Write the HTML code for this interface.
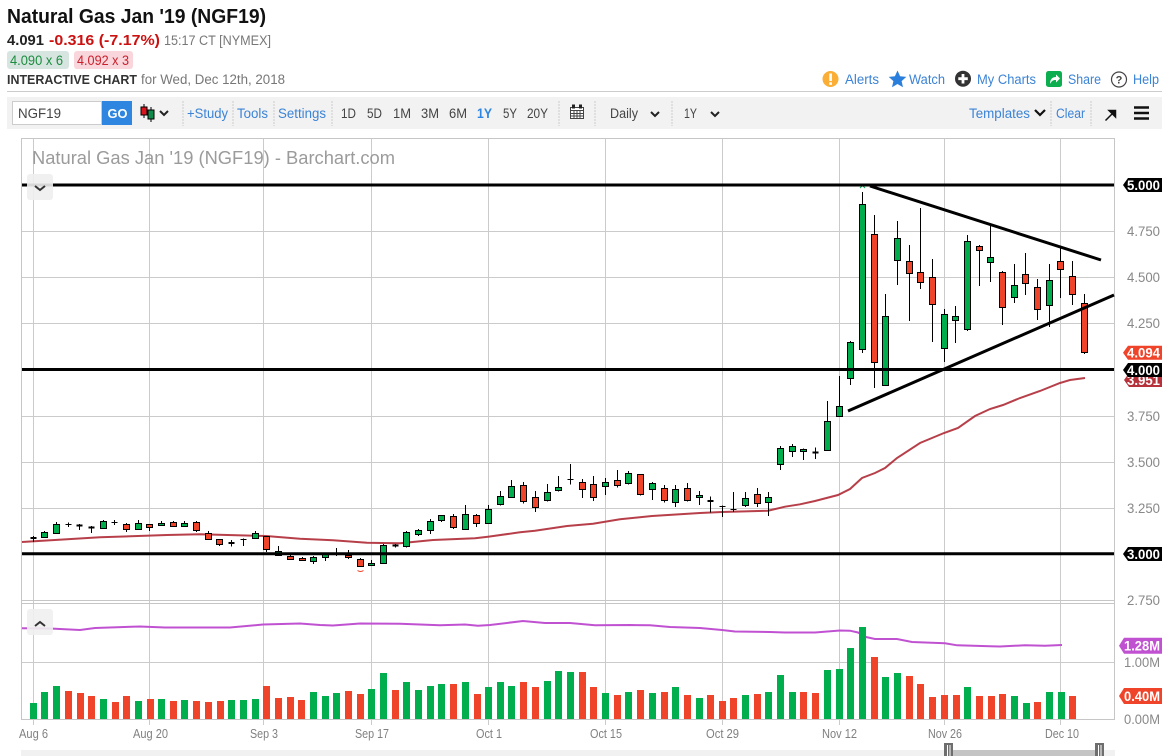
<!DOCTYPE html>
<html><head><meta charset="utf-8"><title>Natural Gas Jan '19 (NGF19)</title>
<style>
html,body{margin:0;padding:0;background:#fff;width:1162px;height:756px;overflow:hidden}
svg{display:block;font-family:"Liberation Sans",sans-serif}
.b{fill:#3b83d6;font-size:13.5px}
.k{fill:#444;font-size:13.5px}
.d{fill:#808080;font-size:13px}
.w{fill:#fff;font-size:13.5px;font-weight:bold}
</style></head><body>
<svg width="1162" height="756" viewBox="0 0 1162 756" xmlns="http://www.w3.org/2000/svg">
<rect width="1162" height="756" fill="#fff"/>
<!-- header -->
<text x="7" y="23" font-size="20" font-weight="bold" fill="#111" textLength="259" lengthAdjust="spacingAndGlyphs">Natural Gas Jan '19 (NGF19)</text>
<text x="7" y="45" font-size="15" font-weight="bold" fill="#222" textLength="37" lengthAdjust="spacingAndGlyphs">4.091</text>
<text x="49" y="45" font-size="15" font-weight="bold" fill="#cc1111" textLength="111" lengthAdjust="spacingAndGlyphs">-0.316 (-7.17%)</text>
<text x="164" y="45" font-size="13.5" fill="#777" textLength="107" lengthAdjust="spacingAndGlyphs">15:17 CT [NYMEX]</text>
<rect x="7" y="51" width="62" height="18" rx="3" fill="#d6e5e0"/>
<text x="10" y="65" font-size="13.5" fill="#1c8c3e" textLength="53" lengthAdjust="spacingAndGlyphs">4.090 x 6</text>
<rect x="74" y="51" width="59" height="18" rx="3" fill="#f8d6dc"/>
<text x="77" y="65" font-size="13.5" fill="#c9202c" textLength="52" lengthAdjust="spacingAndGlyphs">4.092 x 3</text>
<text x="7" y="84" font-size="13" font-weight="bold" fill="#333" textLength="130" lengthAdjust="spacingAndGlyphs">INTERACTIVE CHART</text>
<text x="141" y="84" font-size="13.5" fill="#777" textLength="144" lengthAdjust="spacingAndGlyphs">for Wed, Dec 12th, 2018</text>
<rect x="7" y="91" width="1155" height="1" fill="#ccc"/>
<!-- top right links -->
<circle cx="830.5" cy="79" r="8" fill="#fbae35"/><rect x="829.3" y="73.5" width="2.6" height="7.5" fill="#fff"/><rect x="829.3" y="82.3" width="2.6" height="2.6" fill="#fff"/>
<text class="b" x="845" y="84" textLength="34" lengthAdjust="spacingAndGlyphs">Alerts</text>
<path d="M897.5 70.5l2.6 5.8 6.2.6-4.7 4.2 1.4 6.2-5.5-3.3-5.5 3.3 1.4-6.2-4.7-4.2 6.2-.6z" fill="#2a7fdc"/>
<text class="b" x="909" y="84" textLength="36" lengthAdjust="spacingAndGlyphs">Watch</text>
<circle cx="963" cy="78.7" r="8" fill="#333"/><path d="M963 74v9.5M958.3 78.7h9.5" stroke="#fff" stroke-width="2.8"/>
<text class="b" x="977" y="84" textLength="59" lengthAdjust="spacingAndGlyphs">My Charts</text>
<rect x="1046" y="71" width="16" height="16" rx="2.5" fill="#0cae4f"/><path d="M1050 84c0-5 2.500-7 6-7v-2.500l4 4-4 4V80c-2.800-.2-4.500 1-6 4z" fill="#fff"/>
<text class="b" x="1068" y="84" textLength="33" lengthAdjust="spacingAndGlyphs">Share</text>
<circle cx="1119" cy="79.500" r="7.500" fill="none" stroke="#444" stroke-width="1.200"/><text x="1119" y="83.500" font-size="11" font-weight="bold" fill="#444" text-anchor="middle">?</text>
<text class="b" x="1133" y="84" textLength="26" lengthAdjust="spacingAndGlyphs">Help</text>
<!-- toolbar -->
<rect x="7" y="97" width="1155" height="32" fill="#f2f2f2"/>
<rect x="12.500" y="101.500" width="89" height="23" fill="#fff" stroke="#ccc"/>
<text x="18" y="118" font-size="14" fill="#444" textLength="43" lengthAdjust="spacingAndGlyphs">NGF19</text>
<rect x="102" y="101" width="30" height="24" fill="#2f86e0"/>
<text x="107.500" y="118" font-size="13" font-weight="bold" fill="#fff" textLength="20" lengthAdjust="spacingAndGlyphs">GO</text>
<path d="M144 104v14M151 107v15" stroke="#000" stroke-width="1"/><rect x="141" y="107" width="6" height="8" fill="#d8141c" stroke="#000"/><rect x="148" y="110" width="6" height="9" fill="#108a4a" stroke="#000"/>
<path d="M160 111l4 4 4-4" fill="none" stroke="#222" stroke-width="2"/>
<path d="M183 101v25M233 101v25M274 101v25M332 101v25M559 101v25M595 101v25M672 101v25M1051 101v25M1091 101v25" stroke="#ccc" stroke-dasharray="2 1"/>
<text class="b" x="187" y="118" textLength="41" lengthAdjust="spacingAndGlyphs">+Study</text>
<text class="b" x="237" y="118" textLength="31" lengthAdjust="spacingAndGlyphs">Tools</text>
<text class="b" x="278" y="118" textLength="48" lengthAdjust="spacingAndGlyphs">Settings</text>
<text class="k" x="341" y="118" textLength="15" lengthAdjust="spacingAndGlyphs">1D</text>
<text class="k" x="367" y="118" textLength="15" lengthAdjust="spacingAndGlyphs">5D</text>
<text class="k" x="393" y="118" textLength="18" lengthAdjust="spacingAndGlyphs">1M</text>
<text class="k" x="421" y="118" textLength="18" lengthAdjust="spacingAndGlyphs">3M</text>
<text class="k" x="449" y="118" textLength="18" lengthAdjust="spacingAndGlyphs">6M</text>
<text x="477" y="118" font-size="13.5" font-weight="bold" fill="#2f86e0" textLength="15" lengthAdjust="spacingAndGlyphs">1Y</text>
<text class="k" x="503" y="118" textLength="14" lengthAdjust="spacingAndGlyphs">5Y</text>
<text class="k" x="527" y="118" textLength="21" lengthAdjust="spacingAndGlyphs">20Y</text>
<path d="M570.500 107.500h13v11h-13zM570.500 110.500h13M570.500 113.500h13M570.500 116h13M574 110.500v8M577 110.500v8M580 110.500v8" fill="#fff" stroke="#444" stroke-width="1"/>
<rect x="572" y="104.500" width="3" height="4" fill="#222"/><rect x="579" y="104.500" width="3" height="4" fill="#222"/>
<text class="k" x="610" y="118" textLength="28" lengthAdjust="spacingAndGlyphs">Daily</text>
<path d="M651 112l4 4 4-4" fill="none" stroke="#222" stroke-width="2"/>
<text class="k" x="684" y="118" textLength="13" lengthAdjust="spacingAndGlyphs">1Y</text>
<path d="M711 112l4 4 4-4" fill="none" stroke="#222" stroke-width="2"/>
<text class="b" x="969" y="118" textLength="61" lengthAdjust="spacingAndGlyphs">Templates</text>
<path d="M1035 110l5 5 5-5" fill="none" stroke="#111" stroke-width="2.200"/>
<text class="b" x="1056" y="118" textLength="29" lengthAdjust="spacingAndGlyphs">Clear</text>
<path d="M1105.500 120.500l9-9M1109 110.500h6.500v6.500z" fill="#111" stroke="#111" stroke-width="1.500"/>
<path d="M1134 107.500h15M1134 113h15M1134 118.500h15" stroke="#111" stroke-width="2.500"/>
<!-- chart grid -->
<g stroke="#cbcbcb" fill="none">
<path d="M33.500 138V720M149.500 138V720M263.500 138V720M371.500 138V720M488.500 138V720M605.500 138V720M722.500 138V720M839.500 138V720M944.500 138V720M1060.500 138V720"/>
<path d="M22 231.500H1114M22 277.500H1114M22 323.500H1114M22 416.500H1114M22 462.500H1114M22 508.500H1114M22 662.500H1114"/>
<path d="M33.500 720v5M149.500 720v5M263.500 720v5M371.500 720v5M488.500 720v5M605.500 720v5M722.500 720v5M839.500 720v5M944.500 720v5M1060.500 720v5"/>
</g>
<path d="M22 600.500H1114.500M22 603.500H1114.500M21.500 138.500H1114.500V719.500H21.500Z" fill="none" stroke="#c6c6c6" stroke-width="1"/>
<text x="32" y="164" font-size="18.5" fill="#9b9b9b" textLength="363" lengthAdjust="spacingAndGlyphs">Natural Gas Jan '19 (NGF19) - Barchart.com</text>
<!-- MA -->
<path d="M22 542L100 537.300L167 535L200 534.300L266 536L300 538.700L333 540.300L367 542.700L400 543.300L433 540L475 538.300L488 536.700L520 532.300L535 530.700L567 526L593 523.700L620 519.300L652 516L700 513L722 512L768 510.700L785 506.700L800 504.300L815 501L838 495L850 489L862 478L875 473L885 468L897 458L920 443L944 433L958 428L975 416L990 409L1003 405L1020 398L1040 391L1060 383L1070 380L1085 378" fill="none" stroke="#b12f3a" stroke-width="2" stroke-opacity=".92"/>
<!-- purple -->
<path d="M22 628.300L50 628.500L80 630L95 628L140 626.500L165 627.500L230 627.500L263 624.500L300 623.500L320 625L333 625.500L360 623.500L400 623.700L440 625.300L465 624.500L478 625.700L490 625L523 621L545 623L570 623L595 625.300L630 625L650 625.300L670 627L700 628L722 630L735 631.500L770 632L785 632.500L815 632.500L840 630.500L850 630.700L858 632.500L866 637L875 639L897 639L912 642L945 643.300L957 645.300L990 646.300L1000 646.500L1025 645.300L1045 645.700L1062 645" fill="none" stroke="#c052d2" stroke-width="2"/>
<!-- volume green -->
<path fill="#00ae4d" d="M30 703h7v16h-7zM41 692h7v27h-7zM53 686h7v33h-7zM100 699h7v20h-7zM135 701h7v18h-7zM158 699h7v20h-7zM181 700h7v19h-7zM228 700h7v19h-7zM240 700h7v19h-7zM252 699h7v20h-7zM310 692h7v27h-7zM322 696h7v23h-7zM333 693h7v26h-7zM368 689h7v30h-7zM380 673h7v46h-7zM403 682h7v37h-7zM415 690h7v29h-7zM427 686h7v33h-7zM438 684h7v35h-7zM462 682h7v37h-7zM485 687h7v32h-7zM497 682h7v37h-7zM508 686h7v33h-7zM544 681h7v38h-7zM555 671h7v48h-7zM567 672h7v47h-7zM602 693h7v26h-7zM625 692h7v27h-7zM649 693h7v26h-7zM672 687h7v32h-7zM696 698h7v21h-7zM742 695h7v24h-7zM765 692h7v27h-7zM777 675h7v44h-7zM789 692h7v27h-7zM824 670h7v49h-7zM836 669h7v50h-7zM847 648h7v71h-7zM859 627h7v92h-7zM882 677h7v42h-7zM894 673h7v46h-7zM964 687h7v32h-7zM1011 696h7v23h-7zM1023 703h7v16h-7zM1046 692h7v27h-7zM1058 692h7v27h-7z"/>
<!-- volume red -->
<path fill="#f0442a" d="M65 691h7v28h-7zM77 693h7v26h-7zM88 696h7v23h-7zM112 702h7v17h-7zM123 696h7v23h-7zM147 699h7v20h-7zM170 701h7v18h-7zM193 701h7v18h-7zM205 702h7v17h-7zM217 701h7v18h-7zM263 686h7v33h-7zM275 698h7v21h-7zM287 697h7v22h-7zM298 700h7v19h-7zM345 691h7v28h-7zM357 694h7v25h-7zM392 690h7v29h-7zM450 684h7v35h-7zM474 694h7v25h-7zM520 682h7v37h-7zM532 687h7v32h-7zM579 672h7v47h-7zM590 687h7v32h-7zM614 695h7v24h-7zM637 690h7v29h-7zM661 692h7v27h-7zM684 695h7v24h-7zM707 695h7v24h-7zM719 701h7v18h-7zM730 698h7v21h-7zM754 694h7v25h-7zM800 692h7v27h-7zM812 693h7v26h-7zM871 657h7v62h-7zM906 676h7v43h-7zM917 684h7v35h-7zM929 697h7v22h-7zM941 695h7v24h-7zM953 695h7v24h-7zM976 696h7v23h-7zM988 696h7v23h-7zM999 694h7v25h-7zM1034 702h7v17h-7zM1069 696h7v23h-7z"/>
<!-- wicks -->
<path stroke="#000" stroke-width="1" fill="none" d="M33.500 536V542M44.500 531V538M56.500 522V534M68.500 522.500V527M79.500 524V530M91.500 526V533M103.500 520V529M114.500 520V525M126.500 523V532M138.500 520V530M149.500 524V531M161.500 521V526M173.500 521V527M184.500 521V527M196.500 521V532M208.500 531V540M219.500 539V546M231.500 540V546.500M243.500 538.500V546M255.500 531V539M266.500 536V552M278.500 546V556M290.500 555V560M302.500 557V561M313.500 556V564M325.500 554V561M336.500 548V556M348.500 550V559M360.500 558V567M371.500 560V566M383.500 544V564M395.500 544V547.500M406.500 531V547.500M418.500 529V536M430.500 519V534M441.500 515V522M453.500 514V529M465.500 505V530M476.500 514V527M488.500 505V524M500.500 491V505.500M511.500 480V498M523.500 482V503.500M535.500 491V512M547.500 484V501.500M558.500 476V491.500M570.500 464V484.500M582.500 479V498M593.500 476V501M605.500 478V495M617.500 470V487.500M628.500 471V484.500M640.500 474V495.500M652.500 482V500M664.500 485V502.500M675.500 485V507M687.500 483V501.500M699.500 491V505M710.500 496.500V512.500M722.500 505.500V517M733.500 492V512M745.500 492V507M757.500 488V507M768.500 492V516M780.500 446V470M792.500 444V457M803.500 448.500V460M815.500 447.500V459M827.500 401V451M839.500 376V417M850.500 341V385M862.500 192V353M874.500 215V388M885.500 294V386M897.500 221V285M909.500 245V321M920.500 208V289M932.500 259V342M944.500 309V362M955.500 306V343M967.500 235V331M979.500 245V286M990.500 225V282M1002.500 271V325M1014.500 264V303M1025.500 253V295M1037.500 279V320M1049.500 264V327M1060.500 247V298M1072.500 261V305M1084.500 294V354"/>
<!-- dojis -->
<path stroke="#000" fill="none" stroke-width="2" d="M30.500 538h6M76.500 525.500h6M88.500 527.500h6M228.500 543h6M707.500 501h6M812.500 452.500h6M392.500 545.500h6"/>
<path stroke="#000" fill="none" stroke-width="1" d="M65.500 524.500h6M111.500 522.500h6M240.500 539.500h6M567.500 479.500h6M719.500 506.500h6M730.500 509.500h6"/>
<!-- green bodies -->
<path fill="#00ad4c" stroke="#000" stroke-width="1" d="M41.500 532.500h6v5h-6zM53.500 524.500h6v9h-6zM100.500 521.500h6v7h-6zM135.500 523.500h6v6h-6zM158.500 523.500h6v2h-6zM181.500 523.500h6v3h-6zM252.500 533.500h6v5h-6zM275.500 551.500h6v4h-6zM310.500 557.500h6v4h-6zM322.500 554.500h6v3h-6zM368.500 563.500h6v2h-6zM380.500 545.500h6v18h-6zM403.500 532.500h6v14h-6zM415.500 530.500h6v4h-6zM427.500 521.500h6v9h-6zM438.500 515.500h6v5h-6zM462.500 514.500h6v15h-6zM485.500 509.500h6v14h-6zM497.500 496.500h6v8h-6zM508.500 486.500h6v11h-6zM544.500 492.500h6v8h-6zM555.500 487.500h6v3h-6zM602.500 482.500h6v4h-6zM625.500 473.500h6v10h-6zM649.500 483.500h6v6h-6zM672.500 489.500h6v13h-6zM696.500 495.500h6v2h-6zM742.500 498.500h6v7h-6zM765.500 497.500h6v5h-6zM777.500 448.500h6v16h-6zM789.500 446.500h6v5h-6zM800.500 449.500h6v2h-6zM824.500 421.500h6v29h-6zM836.500 406.500h6v10h-6zM847.500 342.500h6v36h-6zM859.500 204.500h6v145h-6zM882.500 316.500h6v69h-6zM894.500 238.500h6v22h-6zM941.500 314.500h6v34h-6zM952.500 316.500h6v4h-6zM964.500 241.500h6v88h-6zM987.500 257.500h6v5h-6zM1011.500 285.500h6v12h-6zM1046.500 280.500h6v25h-6z"/>
<!-- red bodies -->
<path fill="#f0442a" stroke="#000" stroke-width="1" d="M123.500 524.500h6v5h-6zM146.500 524.500h6v3h-6zM170.500 522.500h6v4h-6zM193.500 522.500h6v8h-6zM205.500 533.500h6v6h-6zM216.500 539.500h6v5h-6zM263.500 536.500h6v13h-6zM287.500 556.500h6v3h-6zM299.500 558.500h6v2h-6zM345.500 555.500h6v2h-6zM357.500 559.500h6v7h-6zM450.500 516.500h6v11h-6zM473.500 515.500h6v8h-6zM520.500 485.500h6v16h-6zM532.500 497.500h6v10h-6zM579.500 482.500h6v7h-6zM590.500 484.500h6v13h-6zM614.500 480.500h6v5h-6zM637.500 474.500h6v20h-6zM661.500 488.500h6v12h-6zM684.500 488.500h6v12h-6zM754.500 494.500h6v9h-6zM871.500 234.500h6v128h-6zM906.500 261.500h6v12h-6zM917.500 272.500h6v10h-6zM929.500 277.500h6v27h-6zM976.500 246.500h6v4h-6zM999.500 272.500h6v35h-6zM1022.500 274.500h6v9h-6zM1034.500 287.500h6v22h-6zM1057.500 261.500h6v8h-6zM1069.500 276.500h6v18h-6zM1081.500 303.500h6v49h-6z"/>
<path d="M357.500 570.500q3 2 6 0" fill="none" stroke="#f0442a" stroke-width="1"/>
<path d="M860 188l2.500-2.500 2.500 2.500" fill="none" stroke="#00ad4c" stroke-width="1"/>
<!-- horizontal black lines -->
<path d="M22 185H1114M22 369.500H1114M22 553.700H1114" stroke="#000" stroke-width="3"/>
<path d="M870 186L1101 260M848 411L1114 295" stroke="#000" stroke-width="3"/>
<!-- collapse buttons -->
<rect x="27" y="174" width="26" height="26" rx="3" fill="#eee" fill-opacity=".9"/>
<path d="M35 186l5 4 5-4" fill="none" stroke="#333" stroke-width="2"/>
<rect x="27" y="609" width="26" height="26" rx="3" fill="#f0f0f0" fill-opacity=".9"/>
<path d="M35 626l5-4 5 4" fill="none" stroke="#333" stroke-width="2"/>
<!-- right axis -->
<g fill="#888" font-size="13.5">
<text x="1127" y="236" textLength="33" lengthAdjust="spacingAndGlyphs">4.750</text>
<text x="1127" y="282" textLength="33" lengthAdjust="spacingAndGlyphs">4.500</text>
<text x="1127" y="328" textLength="33" lengthAdjust="spacingAndGlyphs">4.250</text>
<text x="1127" y="421" textLength="33" lengthAdjust="spacingAndGlyphs">3.750</text>
<text x="1127" y="467" textLength="33" lengthAdjust="spacingAndGlyphs">3.500</text>
<text x="1127" y="513" textLength="33" lengthAdjust="spacingAndGlyphs">3.250</text>
<text x="1127" y="605" textLength="33" lengthAdjust="spacingAndGlyphs">2.750</text>
<text x="1124" y="667" textLength="36" lengthAdjust="spacingAndGlyphs">1.00M</text>
<text x="1124" y="724" textLength="36" lengthAdjust="spacingAndGlyphs">0.00M</text>
</g>
<path d="M1124 380l5-7h33v14h-33z" fill="#b5323a"/><text class="w" x="1127" y="385" textLength="33" lengthAdjust="spacingAndGlyphs">3.951</text>
<path d="M1123 352.700l5-7h34v14h-34z" fill="#f0442a"/><text class="w" x="1127" y="357.500" textLength="33" lengthAdjust="spacingAndGlyphs">4.094</text>
<path d="M1123 370l5-7h34v14h-34z" fill="#000"/><text class="w" x="1127" y="375" textLength="33" lengthAdjust="spacingAndGlyphs">4.000</text>
<path d="M1123 185l5-7h34v14h-34z" fill="#000"/><text class="w" x="1127" y="190" textLength="33" lengthAdjust="spacingAndGlyphs">5.000</text>
<path d="M1123 554l5-7h34v14h-34z" fill="#000"/><text class="w" x="1127" y="559" textLength="33" lengthAdjust="spacingAndGlyphs">3.000</text>
<path d="M1119 645.700l5-8h38v16h-38z" fill="#c052d2"/><text class="w" x="1124" y="650.500" textLength="36" lengthAdjust="spacingAndGlyphs">1.28M</text>
<path d="M1119 696l5-8h38v16h-38z" fill="#f0442a"/><text class="w" x="1124" y="701" textLength="36" lengthAdjust="spacingAndGlyphs">0.40M</text>
<!-- dates -->
<text class="d" x="19" y="738" textLength="29" lengthAdjust="spacingAndGlyphs">Aug 6</text>
<text class="d" x="133" y="738" textLength="35" lengthAdjust="spacingAndGlyphs">Aug 20</text>
<text class="d" x="250" y="738" textLength="28" lengthAdjust="spacingAndGlyphs">Sep 3</text>
<text class="d" x="355" y="738" textLength="34" lengthAdjust="spacingAndGlyphs">Sep 17</text>
<text class="d" x="476" y="738" textLength="26" lengthAdjust="spacingAndGlyphs">Oct 1</text>
<text class="d" x="590" y="738" textLength="32" lengthAdjust="spacingAndGlyphs">Oct 15</text>
<text class="d" x="706" y="738" textLength="33" lengthAdjust="spacingAndGlyphs">Oct 29</text>
<text class="d" x="822" y="738" textLength="35" lengthAdjust="spacingAndGlyphs">Nov 12</text>
<text class="d" x="928" y="738" textLength="34" lengthAdjust="spacingAndGlyphs">Nov 26</text>
<text class="d" x="1045" y="738" textLength="34" lengthAdjust="spacingAndGlyphs">Dec 10</text>
<!-- scrollbar -->
<rect x="21" y="750" width="1094" height="6" fill="#f1f1f1"/>
<rect x="948" y="750" width="152" height="6" fill="#c4c4c4"/>
<rect x="944" y="743" width="9" height="13" fill="#6e6e6e"/><path d="M947.500 745v11M950 745v11" stroke="#fff"/>
<rect x="1095" y="743" width="9" height="13" fill="#6e6e6e"/><path d="M1098.500 745v11M1101 745v11" stroke="#fff"/>
</svg>
</body></html>
